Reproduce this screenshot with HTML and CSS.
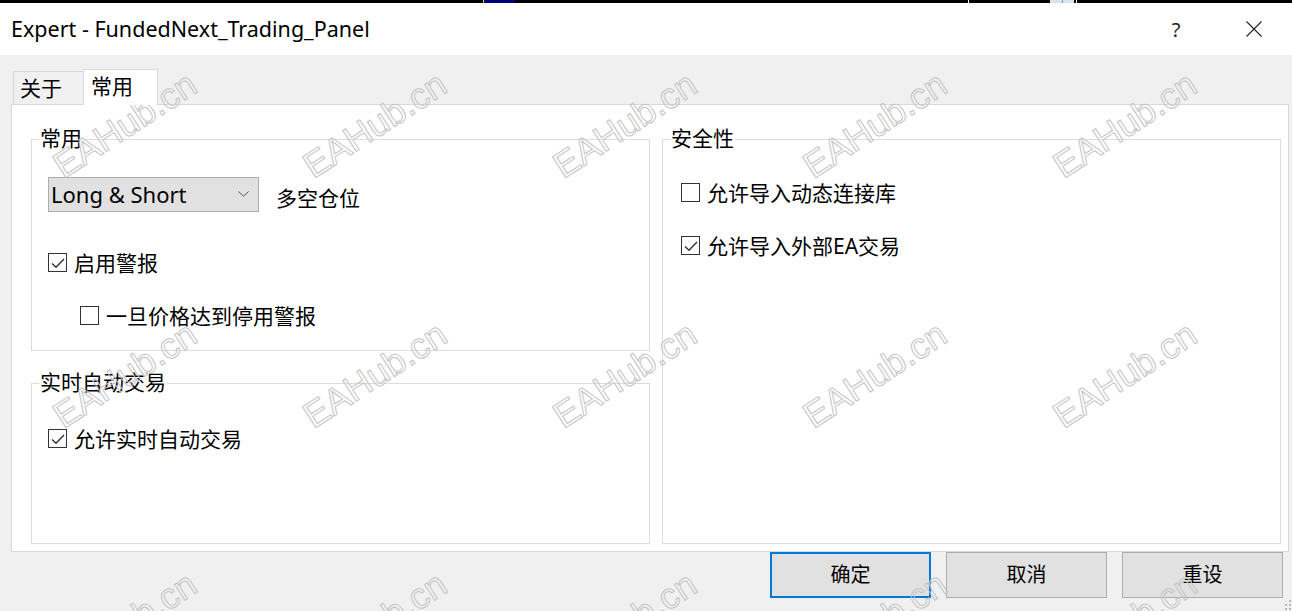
FILE: index.html
```html
<!DOCTYPE html>
<html lang="zh-CN">
<head>
<meta charset="utf-8">
<title>Expert - FundedNext_Trading_Panel</title>
<link rel="stylesheet" href="styles.css">
</head>
<body>
<div class="topstrip">
  <span class="ts-y"></span><span class="ts-navy"></span><span class="ts-w1"></span><span class="ts-box"></span><span class="ts-w2"></span>
</div>
<div class="titlebar">
  <div class="title">Expert - FundedNext_Trading_Panel</div>
  <div class="tb-help">?</div>
  <div class="tb-close">
    <svg width="16" height="16" viewBox="0 0 16 16"><path d="M0.5 0.5 L15.5 15.5 M15.5 0.5 L0.5 15.5" stroke="#222" stroke-width="1.1" fill="none"/></svg>
  </div>
</div>
<div class="main">
  <div class="tabs">
    <div class="tab tab-idle">关于</div>
    <div class="tab tab-active">常用</div>
  </div>
  <div class="panel">
    <div class="col">
      <div class="group g1">
        <div class="glabel">常用</div>
        <div class="sel-row">
          <div class="select">
            <span class="sel-text">Long &amp; Short</span>
            <svg class="chev" width="11" height="6" viewBox="0 0 11 6"><path d="M0.5 0.5 L5.5 5.2 L10.5 0.5" stroke="#555" stroke-width="1" fill="none"/></svg>
          </div>
          <span class="sel-note">多空仓位</span>
        </div>
        <div class="cbrow r1">
          <span class="cb"><svg width="17" height="17" viewBox="0 0 17 17"><path d="M3 9.5 L7 13.3 L15 5" stroke="#333" stroke-width="1.4" fill="none"/></svg></span>
          <span>启用警报</span>
        </div>
        <div class="cbrow r2">
          <span class="cb"></span>
          <span>一旦价格达到停用警报</span>
        </div>
      </div>
      <div class="group g2">
        <div class="glabel">实时自动交易</div>
        <div class="cbrow">
          <span class="cb"><svg width="17" height="17" viewBox="0 0 17 17"><path d="M3 9.5 L7 13.3 L15 5" stroke="#333" stroke-width="1.4" fill="none"/></svg></span>
          <span>允许实时自动交易</span>
        </div>
      </div>
    </div>
    <div class="group g3">
      <div class="glabel">安全性</div>
      <div class="cbrow">
        <span class="cb"></span>
        <span>允许导入动态连接库</span>
      </div>
      <div class="cbrow r3">
        <span class="cb"><svg width="17" height="17" viewBox="0 0 17 17"><path d="M3 9.5 L7 13.3 L15 5" stroke="#333" stroke-width="1.4" fill="none"/></svg></span>
        <span>允许导入外部EA交易</span>
      </div>
    </div>
  </div>
  <div class="btnrow">
    <div class="btn btn-default">确定</div>
    <div class="btn">取消</div>
    <div class="btn">重设</div>
  </div>
</div>
<svg class="grip" width="6" height="10" viewBox="0 0 6 10"><g fill="#b8b8b8"><rect x="4" y="0" width="2" height="2"/><rect x="4" y="4" width="2" height="2"/><rect x="0" y="4" width="2" height="2"/><rect x="4" y="8" width="2" height="2"/><rect x="0" y="8" width="2" height="2"/></g></svg>
<div class="wm">
  <div class="wm-grid">
    <span>EAHub.cn</span><span>EAHub.cn</span><span>EAHub.cn</span><span>EAHub.cn</span><span>EAHub.cn</span><span>EAHub.cn</span>
    <span>EAHub.cn</span><span>EAHub.cn</span><span>EAHub.cn</span><span>EAHub.cn</span><span>EAHub.cn</span><span>EAHub.cn</span>
    <span>EAHub.cn</span><span>EAHub.cn</span><span>EAHub.cn</span><span>EAHub.cn</span><span>EAHub.cn</span><span>EAHub.cn</span>
  </div>
</div>
</body>
</html>
```
FILE: styles.css
```css
* { box-sizing: border-box; margin: 0; padding: 0; }
html, body { width: 1292px; height: 611px; overflow: hidden; }
body {
  position: relative;
  background: #f0f0f0;
  color: #000;
  font-family: "Noto Sans", "Noto Sans CJK SC", sans-serif;
}
.topstrip { height: 3px; background: #000; display: flex; }
.ts-y { margin-left: 483px; width: 1px; background: #e8d000; }
.ts-navy { width: 31px; background: #00007a; }
.ts-w1 { margin-left: 453px; width: 1px; background: #fff; }
.ts-box { margin-left: 81px; width: 24px; background: #d6e4f2; display: flex; justify-content: center; }
.ts-box::after { content: ""; width: 1px; background: #8a9ab0; }
.ts-w2 { margin-left: 2px; width: 1px; background: #fff; }

.titlebar { height: 52px; background: #fff; display: flex; align-items: center; }
.title { flex: 1; padding-left: 11px; padding-bottom: 1px; font-size: 21.5px; white-space: nowrap; }
.tb-help { width: 80px; height: 52px; display: flex; align-items: center; justify-content: center; font-size: 20px; color: #222; }
.tb-close { width: 76px; height: 52px; display: flex; align-items: center; justify-content: center; }

.main { padding: 14px 3px 0 11px; }
.tabs { display: flex; align-items: flex-end; padding-left: 2px; }
.tab { font-size: 21px; display: flex; align-items: center; line-height: 1; }
.tab-idle {
  width: 70px; height: 33px; padding-left: 6px;
  border: 1px solid #d9d9d9; border-right: none; border-bottom: none;
  background: #f0f0f0;
}
.tab-active {
  width: 75px; height: 36px; margin-bottom: -1px; padding-left: 7px; padding-bottom: 2px;
  border: 1px solid #d9d9d9; border-bottom: none;
  background: #fff; position: relative; z-index: 1;
}

.panel {
  height: 448px;
  background: #fff;
  border: 1px solid #d9d9d9;
  display: grid;
  grid-template-columns: 1fr 1fr;
  column-gap: 12px;
  padding: 34px 7px 7px 19px;
}
.col { display: flex; flex-direction: column; }
.group { border: 1px solid #dcdcdc; position: relative; }
.g1 { height: 212px; padding: 37px 0 0 16px; }
.g2 { flex: 1; margin-top: 32px; padding: 40px 0 0 16px; }
.g3 { padding: 38px 0 0 18px; }
.glabel {
  position: absolute; top: -14px; left: 7px;
  padding: 0 1px; background: #fff;
  font-size: 21px; line-height: 24px; white-space: nowrap;
}

.sel-row { display: flex; align-items: center; }
.select {
  width: 211px; height: 35px;
  display: flex; align-items: center;
  padding-left: 2px; padding-bottom: 1px;
  background: #e1e1e1; border: 1px solid #adadad;
  font-size: 22px;
}
.chev { margin-left: auto; margin-right: 9px; }
.sel-note { margin-left: 17px; margin-top: 4px; font-size: 21px; }

.cbrow { display: flex; align-items: center; height: 28px; font-size: 21px; white-space: nowrap; }
.g1 .r1 { margin-top: 36px; }
.g1 .r2 { margin-top: 25px; margin-left: 32px; }
.g3 .r3 { margin-top: 25px; }
.cb {
  width: 19px; height: 19px; flex: none;
  border: 1px solid #333; background: #fff;
  margin-right: 7px;
  display: flex;
}

.btnrow { display: flex; justify-content: flex-end; gap: 15px; padding-right: 6px; }
.btn {
  width: 161px; height: 46px;
  display: flex; align-items: center; justify-content: center;
  padding-bottom: 3px;
  background: #e1e1e1; border: 1px solid #adadad;
  font-size: 20px;
}
.btn-default { border: 2px solid #0078d7; }

.grip { position: absolute; right: 1px; bottom: 1px; }

.wm {
  position: absolute; left: 0; top: 0;
  width: 1292px; height: 611px;
  overflow: hidden;
  pointer-events: none;
}
.wm-grid {
  display: grid;
  grid-template-columns: repeat(6, 250px);
  grid-auto-rows: 250px;
}
.wm span {
  display: flex; align-items: center; justify-content: center;
  font-family: "Liberation Sans", Arial, sans-serif;
  font-size: 36px;
  color: transparent;
  -webkit-text-stroke: 1px #c4c4c4;
  transform: rotate(-33deg);
  white-space: nowrap;
}
```
